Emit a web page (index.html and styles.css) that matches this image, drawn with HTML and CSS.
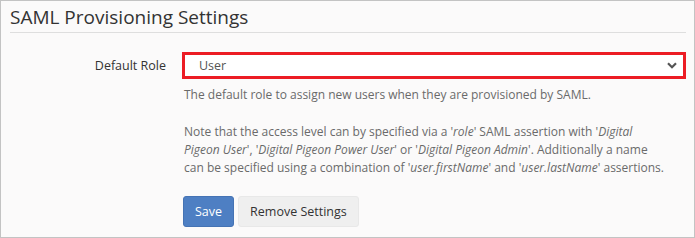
FILE: index.html
```html
<!DOCTYPE html>
<html lang="en">
<head>
    <meta charset="UTF-8">
    <title>SAML Provisioning Settings</title>
    <link rel="stylesheet" href="styles.css">
</head>
<body>
    <div class="panel">
        <h2 class="panel-title">SAML Provisioning Settings</h2>

        <div class="form-row">
            <label class="form-label">Default Role</label>
            <div class="form-control">
                <div class="select-box">
                    <span class="select-value">User</span>
                    <svg class="select-arrow" width="10" height="7" viewBox="0 0 10 7">
                        <path d="M1 1.2 L5 5.2 L9 1.2" fill="none" stroke="#555" stroke-width="2.2"/>
                    </svg>
                </div>
                <p class="help">The default role to assign new users when they are provisioned by SAML.</p>
                <p class="help">Note that the access level can by specified via a '<i>role</i>' SAML assertion with '<i>Digital Pigeon User</i>', '<i>Digital Pigeon Power User</i>' or '<i>Digital Pigeon Admin</i>'. Additionally a name can be specified using a combination of '<i>user.firstName</i>' and '<i>user.lastName</i>' assertions.</p>
                <div class="actions">
                    <button class="btn btn-primary">Save</button>
                    <button class="btn btn-default">Remove Settings</button>
                </div>
            </div>
        </div>
    </div>
</body>
</html>
```

FILE: styles.css
```css
body {
    margin: 0;
    font-family: "Open Sans", Arial, sans-serif;
    background: #fff;
}

.panel {
    width: 695px;
    height: 238px;
    box-sizing: border-box;
    border: 1px solid #c3c3c3;
    background: #fbfafa;
    padding: 0 8px 0 9px;
    overflow: hidden;
}

.panel-title {
    margin: 0;
    padding: 5px 0 3px 0;
    font-size: 19px;
    font-weight: normal;
    color: #333;
    line-height: 23px;
    border-bottom: 1px solid #dedede;
}

.form-row {
    display: grid;
    grid-template-columns: 156px 1fr;
    column-gap: 16px;
    margin-top: 19px;
}

.form-label {
    text-align: right;
    font-size: 12.5px;
    color: #333;
    line-height: 27px;
}

.select-box {
    display: flex;
    align-items: center;
    justify-content: space-between;
    height: 21px;
    border: 3px solid #ec1c24;
    background: #fff;
    padding: 0 6px 0 14px;
}

.select-value {
    font-size: 12.5px;
    color: #555;
}

.help {
    margin: 7px 0 19px 2px;
    font-size: 12px;
    line-height: 18px;
    color: #6a6a6a;
    padding-right: 22px;
}

.help + .help {
    margin-top: 0;
}

.actions {
    display: flex;
    gap: 4px;
    margin-top: 1px;
    padding-left: 1px;
}

.btn {
    height: 31px;
    padding: 0 11px;
    font-family: "Open Sans", Arial, sans-serif;
    font-size: 12.5px;
    border-radius: 3px;
    cursor: pointer;
}

.btn-primary {
    background: #4e7fc3;
    border: 1px solid #4573b4;
    color: #fff;
}

.btn-default {
    background: #efefef;
    border: 1px solid #e8e8e8;
    color: #333;
}
```
